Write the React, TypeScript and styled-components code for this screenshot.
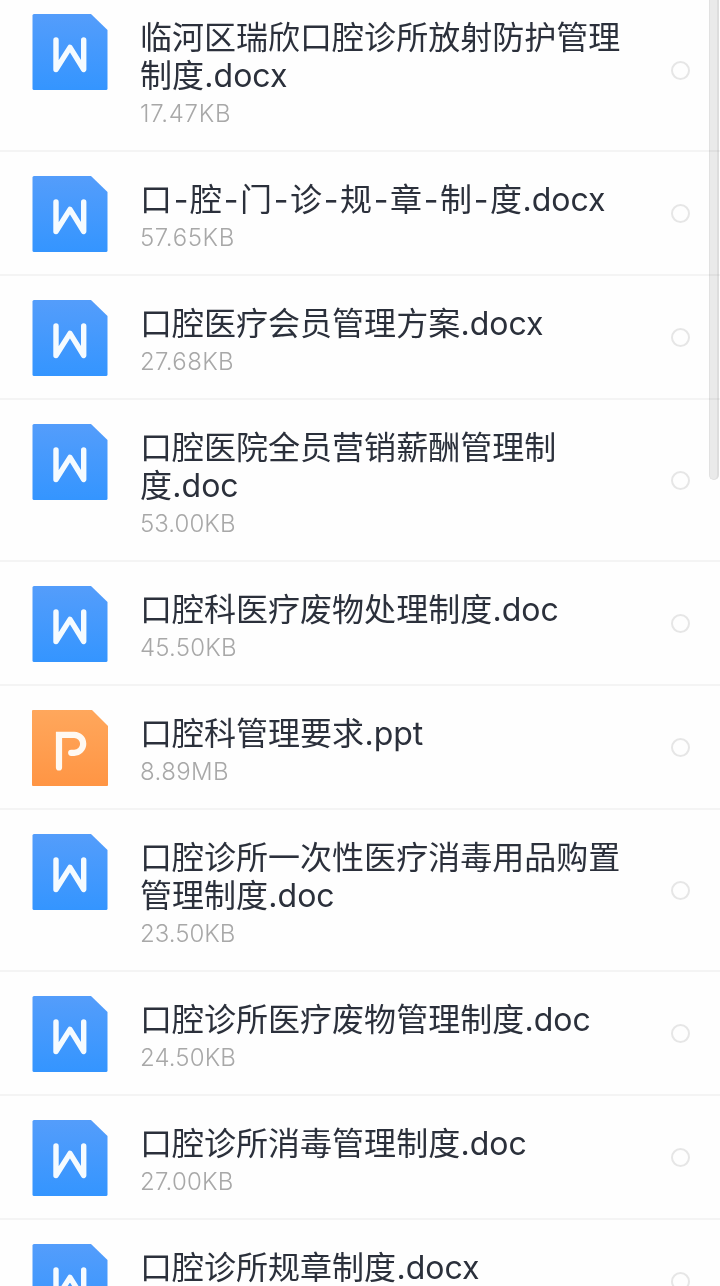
import React from 'react';
import styled, { createGlobalStyle } from 'styled-components';

const GlobalStyle = createGlobalStyle`
  * { box-sizing: border-box; }
  body { margin: 0; background: #fefefe; }
`;

const Screen = styled.main`
  position: relative;
  width: 720px;
  height: 1286px;
  overflow: hidden;
  background: #fefefe;
  font-family: Inter, 'Noto Sans CJK SC', sans-serif;
`;

const FileList = styled.ul`
  list-style: none;
  margin: -10px 0 0;
  padding: 0;
`;

const Row = styled.li`
  display: flex;
  align-items: flex-start;
  padding: 29px 30px 17px 32px;
  border-bottom: 2px solid #f4f4f4;
`;

const IconBox = styled.div`
  flex: none;
  width: 76px;
  height: 76px;
  margin: -5px 32px 0 0;

  svg { display: block; }
`;

const Info = styled.div`
  flex: none;
  width: 490px;
`;

const Title = styled.div`
  font-size: 32px;
  line-height: 38px;
  color: #2b303b;
  white-space: nowrap;
`;

const Latin = styled.span`
  margin-left: 0.3px;
`;

const Dash = styled.span`
  display: inline-block;
  width: 18px;
  text-align: center;
`;

const Size = styled.div<{ $tracking: number }>`
  height: 38px;
  font-size: 24px;
  line-height: 38px;
  font-weight: 350;
  letter-spacing: ${(p) => p.$tracking}px;
  color: #a8a8a8;
`;

const Radio = styled.span`
  flex: none;
  align-self: center;
  width: 19px;
  height: 19px;
  margin: -12px 0 0 auto;
  border: 2px solid #e6e6e6;
  border-radius: 50%;
`;

const ScrollThumb = styled.div`
  position: absolute;
  top: -10px;
  right: 1px;
  width: 10px;
  height: 490px;
  border: 1px solid #e2e2e2;
  border-right: 2px solid #dedede;
  border-radius: 5px;
  background: #ebebeb;
  mix-blend-mode: multiply;
`;

type Kind = 'word' | 'slides';

const FileIcon = ({ kind, id }: { kind: Kind; id: string }) => (
  <svg width="76" height="76" viewBox="0 0 76 76" fill="none">
    <defs>
      <linearGradient id={id} x1="0" y1="0" x2="0" y2="1">
        <stop offset="0" stopColor={kind === 'word' ? '#549dfb' : '#ffa75c'} />
        <stop offset="1" stopColor={kind === 'word' ? '#3495ff' : '#ff9544'} />
      </linearGradient>
    </defs>
    {kind === 'word' ? (
      <>
        <path d="M2 0H59L75.5 16V74.5Q75.5 76 74 76H2Q.5 76 .5 74.5V1.5Q.5 0 2 0Z" fill={`url(#${id})`} />
        <path d="M24 26V55.5L38 33.4L51.7 55.5V26" stroke="#f5fbff" strokeWidth="5.4" strokeLinecap="round" strokeLinejoin="round" />
      </>
    ) : (
      <>
        <path d="M1 0H60L76 16V75Q76 76 75 76H1Q0 76 0 75V1Q0 0 1 0Z" fill={`url(#${id})`} />
        <path d="M27 57.5V24.8H42.2A9 9 0 0 1 42.2 42.8H39.2" stroke="#fff9f2" strokeWidth="6.2" strokeLinecap="round" strokeLinejoin="miter" />
      </>
    )}
  </svg>
);

const files: { lines: string[]; ext: string; size?: string; tracking?: number; kind: Kind }[] = [
  { lines: ['临河区瑞欣口腔诊所放射防护管理', '制度'], ext: '.docx', size: '17.47KB', tracking: 0.7, kind: 'word' },
  { lines: ['口-腔-门-诊-规-章-制-度'], ext: '.docx', size: '57.65KB', tracking: 0.6, kind: 'word' },
  { lines: ['口腔医疗会员管理方案'], ext: '.docx', size: '27.68KB', tracking: 0.35, kind: 'word' },
  { lines: ['口腔医院全员营销薪酬管理制', '度'], ext: '.doc', size: '53.00KB', tracking: 0.05, kind: 'word' },
  { lines: ['口腔科医疗废物处理制度'], ext: '.doc', size: '45.50KB', tracking: 0.2, kind: 'word' },
  { lines: ['口腔科管理要求'], ext: '.ppt', size: '8.89MB', tracking: 0.4, kind: 'slides' },
  { lines: ['口腔诊所一次性医疗消毒用品购置', '管理制度'], ext: '.doc', size: '23.50KB', tracking: 0, kind: 'word' },
  { lines: ['口腔诊所医疗废物管理制度'], ext: '.doc', size: '24.50KB', tracking: 0.1, kind: 'word' },
  { lines: ['口腔诊所消毒管理制度'], ext: '.doc', size: '27.00KB', tracking: 0.2, kind: 'word' },
  { lines: ['口腔诊所规章制度'], ext: '.docx', kind: 'word' },
];

const renderLine = (line: string) =>
  line.split('').map((c, i) => (c === '-' ? <Dash key={i}>-</Dash> : c));

export default function App() {
  return (
    <>
      <GlobalStyle />
      <Screen>
        <FileList>
          {files.map((f, n) => (
            <Row key={n}>
              <IconBox>
                <FileIcon kind={f.kind} id={`fill-${n}`} />
              </IconBox>
              <Info>
                {f.lines.map((line, i) => (
                  <Title key={i}>
                    {renderLine(line)}
                    {i === f.lines.length - 1 && <Latin>{f.ext}</Latin>}
                  </Title>
                ))}
                <Size $tracking={f.tracking ?? 0}>{f.size}</Size>
              </Info>
              <Radio />
            </Row>
          ))}
        </FileList>
        <ScrollThumb />
      </Screen>
    </>
  );
}
